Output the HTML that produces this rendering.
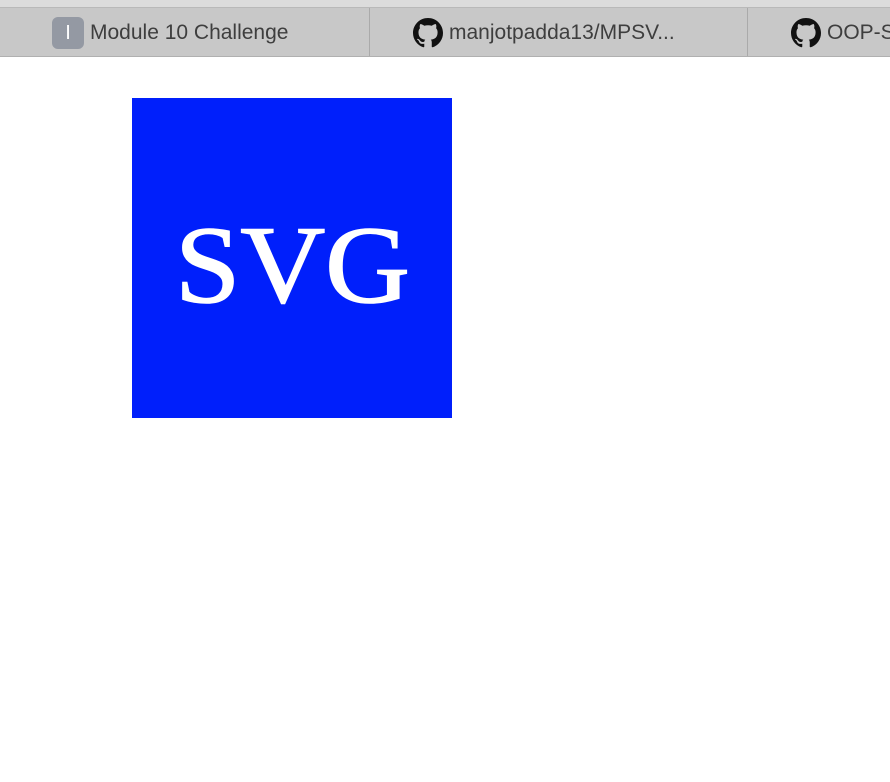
<!DOCTYPE html>
<html><head><style>
html,body{margin:0;padding:0;width:890px;height:782px;overflow:hidden;background:#fff;font-family:"Liberation Sans",sans-serif}
.top{position:absolute;left:0;top:0;width:890px;height:7px;background:#dcdcdc;border-bottom:1px solid #b9b9b9}
.bar{position:absolute;left:0;top:8px;width:890px;height:48px;background:#c8c8c8;border-bottom:1px solid #b0b0b0}
.sep{position:absolute;top:8px;width:1px;height:48px;background:#aaa}
.tab{position:absolute;top:9px;height:48px;display:flex;align-items:center;font-size:21px;color:#3e3e3e;white-space:nowrap}
.ic{width:32px;height:32px;border-radius:6px;background:#9499a3;color:#fff;font-size:20px;display:flex;align-items:center;justify-content:center;margin-right:6px}
.sq{position:absolute;left:132px;top:98px;width:320px;height:320px;background:#001ffb}
</style></head><body>
<div class="top"></div><div class="bar"></div>
<div class="sep" style="left:369px"></div><div class="sep" style="left:747px"></div>
<div class="tab" style="left:52px"><div class="ic">I</div>Module 10 Challenge</div>
<div class="tab" style="left:413px"><svg width="30" height="30" viewBox="0 0 16 16" style="margin-right:6px"><path fill="#111" d="M8 0C3.58 0 0 3.58 0 8c0 3.54 2.29 6.53 5.47 7.59.4.07.55-.17.55-.38 0-.19-.01-.82-.01-1.49-2.01.37-2.53-.49-2.69-.94-.09-.23-.48-.94-.82-1.13-.28-.15-.68-.52-.01-.53.63-.01 1.08.58 1.23.82.72 1.21 1.87.87 2.33.66.07-.52.28-.87.51-1.07-1.78-.2-3.64-.89-3.64-3.95 0-.87.31-1.59.82-2.15-.08-.2-.36-1.02.08-2.12 0 0 .67-.21 2.2.82.64-.18 1.32-.27 2-.27.68 0 1.36.09 2 .27 1.53-1.04 2.2-.82 2.2-.82.44 1.1.16 1.92.08 2.12.51.56.82 1.27.82 2.15 0 3.07-1.87 3.75-3.65 3.95.29.25.54.73.54 1.48 0 1.07-.01 1.93-.01 2.2 0 .21.15.46.55.38A8.013 8.013 0 0016 8c0-4.42-3.58-8-8-8z"/></svg>manjotpadda13/MPSV...</div>
<div class="tab" style="left:791px"><svg width="30" height="30" viewBox="0 0 16 16" style="margin-right:6px"><path fill="#111" d="M8 0C3.58 0 0 3.58 0 8c0 3.54 2.29 6.53 5.47 7.59.4.07.55-.17.55-.38 0-.19-.01-.82-.01-1.49-2.01.37-2.53-.49-2.69-.94-.09-.23-.48-.94-.82-1.13-.28-.15-.68-.52-.01-.53.63-.01 1.08.58 1.23.82.72 1.21 1.87.87 2.33.66.07-.52.28-.87.51-1.07-1.78-.2-3.64-.89-3.64-3.95 0-.87.31-1.59.82-2.15-.08-.2-.36-1.02.08-2.12 0 0 .67-.21 2.2.82.64-.18 1.32-.27 2-.27.68 0 1.36.09 2 .27 1.53-1.04 2.2-.82 2.2-.82.44 1.1.16 1.92.08 2.12.51.56.82 1.27.82 2.15 0 3.07-1.87 3.75-3.65 3.95.29.25.54.73.54 1.48 0 1.07-.01 1.93-.01 2.2 0 .21.15.46.55.38A8.013 8.013 0 0016 8c0-4.42-3.58-8-8-8z"/></svg>OOP-SVG</div>
<div class="sq"><svg width="320" height="320"><text x="43" y="204" font-family="Liberation Serif, serif" font-size="110" fill="#fff" stroke="#fff" stroke-width="1.5" textLength="235" lengthAdjust="spacingAndGlyphs">SVG</text></svg></div>
</body></html>
